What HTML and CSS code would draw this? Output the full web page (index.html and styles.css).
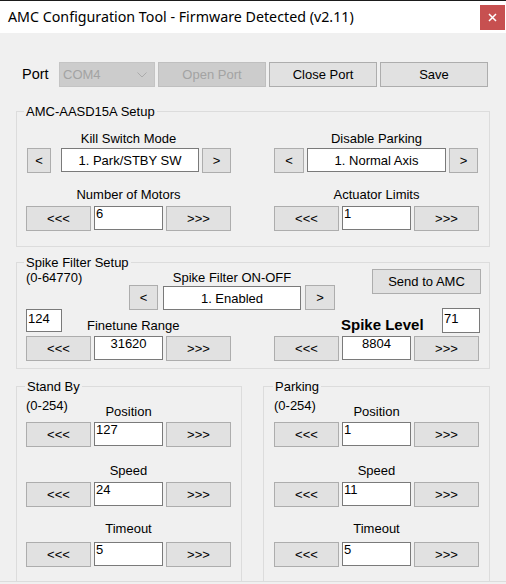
FILE: index.html
```html
<!DOCTYPE html>
<html>
<head>
<meta charset="utf-8">
<title>AMC Configuration Tool</title>
<link rel="stylesheet" href="styles.css">
</head>
<body>
<header class="titlebar">
  <span class="title">AMC Configuration Tool - Firmware Detected (v2.11)</span>
  <span class="close"><svg width="9" height="9" viewBox="0 0 9 9"><path d="M1 1L8 8M8 1L1 8" stroke="#fff" stroke-width="1.5"/></svg></span>
</header>
<main class="form">
  <div class="portrow">
    <span class="portlbl">Port</span>
    <div class="combo"><span>COM4</span><svg class="chev" width="10" height="6" viewBox="0 0 10 6"><path d="M0.5 0.5L5 5L9.5 0.5" fill="none" stroke="#ababab" stroke-width="1"/></svg></div>
    <button class="btn wide disabled">Open Port</button>
    <button class="btn wide">Close Port</button>
    <button class="btn wide">Save</button>
  </div>

  <fieldset class="group g-setup">
    <legend>AMC-AASD15A Setup</legend>
    <div class="cols">
      <div class="col">
        <div class="lbl">Kill Switch Mode</div>
        <div class="row r-sel">
          <button class="btn b-lt-small">&lt;</button>
          <div class="sel s-kill">1. Park/STBY SW</div>
          <button class="btn b-gt">&gt;</button>
        </div>
        <div class="lbl l-second">Number of Motors</div>
        <div class="row step r-step">
          <button class="btn">&lt;&lt;&lt;</button>
          <div class="tb">6</div>
          <button class="btn">&gt;&gt;&gt;</button>
        </div>
      </div>
      <div class="col">
        <div class="lbl">Disable Parking</div>
        <div class="row r-sel">
          <button class="btn b-lt">&lt;</button>
          <div class="sel s-park">1. Normal Axis</div>
          <button class="btn b-gt">&gt;</button>
        </div>
        <div class="lbl l-second">Actuator Limits</div>
        <div class="row step r-step">
          <button class="btn">&lt;&lt;&lt;</button>
          <div class="tb">1</div>
          <button class="btn">&gt;&gt;&gt;</button>
        </div>
      </div>
    </div>
  </fieldset>

  <fieldset class="group g-spike">
    <legend>Spike Filter Setup</legend>
    <div class="sp-top">
      <div class="range r-spike">(0-64770)</div>
      <div class="sp-mid">
        <div class="lbl">Spike Filter ON-OFF</div>
        <div class="row">
          <button class="btn b-sq">&lt;</button>
          <div class="sel s-en">1. Enabled</div>
          <button class="btn b-sq2">&gt;</button>
        </div>
      </div>
      <button class="btn b-send">Send to AMC</button>
    </div>
    <div class="sp-line">
      <div class="tb tb-124">124</div>
      <div class="lbl l-fine">Finetune Range</div>
      <div class="l-level">Spike Level</div>
      <div class="tb tb-71">71</div>
    </div>
    <div class="cols sp-steps">
      <div class="row step">
        <button class="btn">&lt;&lt;&lt;</button>
        <div class="tb center">31620</div>
        <button class="btn">&gt;&gt;&gt;</button>
      </div>
      <div class="row step">
        <button class="btn">&lt;&lt;&lt;</button>
        <div class="tb center">8804</div>
        <button class="btn">&gt;&gt;&gt;</button>
      </div>
    </div>
  </fieldset>

  <div class="bottom">
    <fieldset class="group g-sb">
      <legend>Stand By</legend>
      <div class="hdr">
        <span class="range">(0-254)</span>
        <span class="lbl l-pos">Position</span>
        <span></span>
      </div>
      <div class="row step r-1">
        <button class="btn">&lt;&lt;&lt;</button>
        <div class="tb">127</div>
        <button class="btn">&gt;&gt;&gt;</button>
      </div>
      <div class="lbl l-speed">Speed</div>
      <div class="row step r-2">
        <button class="btn">&lt;&lt;&lt;</button>
        <div class="tb">24</div>
        <button class="btn">&gt;&gt;&gt;</button>
      </div>
      <div class="lbl l-timeout">Timeout</div>
      <div class="row step r-3">
        <button class="btn">&lt;&lt;&lt;</button>
        <div class="tb">5</div>
        <button class="btn">&gt;&gt;&gt;</button>
      </div>
    </fieldset>
    <fieldset class="group g-pk">
      <legend>Parking</legend>
      <div class="hdr">
        <span class="range">(0-254)</span>
        <span class="lbl l-pos">Position</span>
        <span></span>
      </div>
      <div class="row step r-1">
        <button class="btn">&lt;&lt;&lt;</button>
        <div class="tb">1</div>
        <button class="btn">&gt;&gt;&gt;</button>
      </div>
      <div class="lbl l-speed">Speed</div>
      <div class="row step r-2">
        <button class="btn">&lt;&lt;&lt;</button>
        <div class="tb">11</div>
        <button class="btn">&gt;&gt;&gt;</button>
      </div>
      <div class="lbl l-timeout">Timeout</div>
      <div class="row step r-3">
        <button class="btn">&lt;&lt;&lt;</button>
        <div class="tb">5</div>
        <button class="btn">&gt;&gt;&gt;</button>
      </div>
    </fieldset>
  </div>
  <div class="bottomline"></div>
</main>
</body>
</html>
```

FILE: styles.css
```css
* { box-sizing: border-box; }

html, body {
  margin: 0;
  padding: 0;
}

body {
  width: 506px;
  height: 584px;
  overflow: hidden;
  background: #f0f0f0;
  font-family: "Liberation Sans", Arial, sans-serif;
  font-size: 13px;
  line-height: 15px;
  color: #000;
}

/* title bar */
.titlebar {
  height: 33px;
  background: #fff;
  border-top: 1px solid #1b1b1b;
  display: flex;
  align-items: center;
  padding-left: 8px;
}

.title {
  font-family: "Noto Sans", "Open Sans", sans-serif;
  font-size: 14.25px;
  line-height: 18px;
  color: #000;
}

.close {
  margin-left: auto;
  margin-right: 1px;
  width: 25px;
  height: 25px;
  background: #c75050;
  display: flex;
  align-items: center;
  justify-content: center;
}

/* form */
.form {
  padding-top: 29px;
}

.portrow {
  display: flex;
  align-items: center;
  height: 25px;
  padding-left: 22px;
}

.portlbl {
  width: 37px;
  font-size: 14.5px;
  line-height: 17px;
}

.combo {
  width: 96px;
  height: 25px;
  background: #cccccc;
  border: 1px solid #c4c4c4;
  color: #a3a3a3;
  display: flex;
  align-items: center;
  padding-left: 3px;
}

.chev {
  margin-left: auto;
  margin-right: 7px;
}

.btn {
  height: 25px;
  width: 65px;
  padding: 0;
  margin: 0;
  background: #e1e1e1;
  border: 1px solid #adadad;
  border-radius: 0;
  font-family: "Liberation Sans", Arial, sans-serif;
  font-size: 13px;
  line-height: 15px;
  color: #000;
  display: flex;
  align-items: center;
  justify-content: center;
  flex: none;
}

.btn.disabled {
  background: #cccccc;
  border-color: #bfbfbf;
  color: #a3a3a3;
}

.btn.wide {
  width: 108px;
  margin-left: 3px;
}

/* group boxes */
.group {
  margin: 0;
  padding: 0;
  border: 1px solid #dcdcdc;
  min-width: 0;
}

.group legend {
  padding: 0 2px;
  margin-left: -2px;
  font-size: 13px;
  line-height: 15px;
}

.g-setup {
  margin: 17px 0 0 16px;
  width: 474px;
  padding: 12px 0 15px 9px;
}

.cols {
  display: flex;
  gap: 43px;
}

.col {
  width: 205px;
  display: flex;
  flex-direction: column;
}

.lbl {
  text-align: center;
  line-height: 15px;
}

.row {
  display: flex;
  align-items: flex-start;
}

.r-sel { margin-top: 2px; }
.l-second { margin-top: 14px; }
.r-step { margin-top: 4px; }

.tb {
  height: 24px;
  background: #fff;
  border: 1px solid #7a7a7a;
  padding: 0 1px;
  line-height: 14px;
  flex: none;
}

.tb.center { text-align: center; }

.step .tb {
  width: 69px;
  margin: 0 3px;
}

.sel {
  height: 24px;
  background: #fff;
  border: 1px solid #7a7a7a;
  display: flex;
  align-items: center;
  justify-content: center;
  flex: none;
}

.b-lt-small { width: 24px; margin-left: 1px; }
.s-kill { width: 138px; margin-left: 10px; }
.b-gt { width: 29px; margin-left: 3px; }
.b-lt { width: 30px; }
.s-park { width: 139px; margin-left: 3px; }

/* spike filter */
.g-spike {
  margin: 8px 0 0 16px;
  width: 474px;
  padding: 0 0 7px 9px;
}

.sp-top {
  display: flex;
  align-items: flex-start;
}

.range {
  line-height: 15px;
}

.r-spike {
  width: 103px;
}

.sp-mid {
  width: 206px;
  display: flex;
  flex-direction: column;
}

.b-sq { width: 29px; }
.s-en { width: 138px; margin-left: 5px; margin-top: 1px; }
.b-sq2 { width: 30px; margin-left: 4px; }

.b-send {
  width: 109px;
  margin-left: 37px;
  margin-top: -1px;
}

.sp-line {
  display: flex;
  align-items: flex-start;
  margin-top: -2px;
}

.tb-124 {
  width: 36px;
  height: 23px;
  margin-top: 1px;
  padding-top: 2px;
}

.l-fine {
  width: 254px;
  margin-left: 25px;
  margin-top: 10px;
  text-align: left;
}

.l-level {
  width: 101px;
  margin-top: 8px;
  font-weight: bold;
  font-size: 15px;
  line-height: 17px;
}

.tb-71 {
  width: 38px;
  height: 25px;
  padding-top: 3px;
}

.sp-steps {
  margin-top: 3px;
}

.sp-steps .row { width: 205px; }

/* stand by / parking */
.bottom {
  display: flex;
  margin: 10px 0 0 16px;
}

.g-sb {
  width: 226px;
  padding: 0 0 14px 9px;
  border-bottom: none;
}

.g-pk {
  width: 227px;
  margin-left: 21px;
  padding: 0 0 14px 10px;
  border-bottom: none;
}

.g-sb legend, .g-pk legend {
  margin-left: -1px;
}

.hdr {
  width: 205px;
  display: grid;
  grid-template-columns: 1fr auto 1fr;
  align-items: start;
}

.hdr .range { margin-top: 4px; }
.l-pos { margin-top: 10px; }

.g-sb .row, .g-pk .row { width: 205px; }
.r-1 { margin-top: 3px; }
.l-speed { width: 205px; margin-top: 16px; }
.r-2 { margin-top: 4px; }
.l-timeout { width: 205px; margin-top: 14px; }
.r-3 { margin-top: 6px; }

.bottomline {
  height: 3px;
  border-top: 1px solid #dcdcdc;
}
```
